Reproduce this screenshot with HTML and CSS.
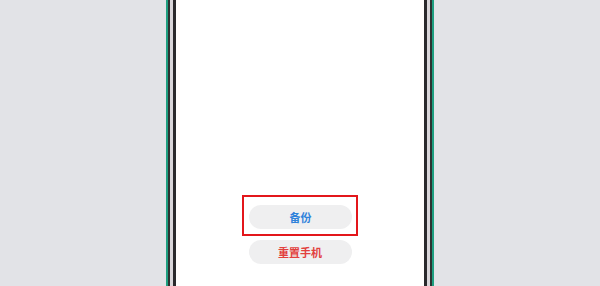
FILE: index.html
```html
<!DOCTYPE html>
<html lang="zh-CN">

<head>
    <meta charset="UTF-8">
    <meta name="viewport" content="width=device-width, initial-scale=1.0">
    <title>备份</title>
    <link rel="stylesheet" href="styles.css">
</head>

<body>
    <div class="stage">
        <div class="phone">
            <div class="actions">
                <div class="highlight">
                    <button class="pill backup">备份</button>
                </div>
                <button class="pill reset">重置手机</button>
            </div>
        </div>
    </div>
</body>

</html>
```

FILE: styles.css
```css
body {
    margin: 0;
    font-family: "Noto Sans CJK SC", "Noto Sans", sans-serif;
}

.stage {
    height: 286px;
    background: #e2e3e7;
    display: flex;
    justify-content: center;
    overflow: hidden;
}

.phone {
    width: 248px;
    height: 326px;
    margin-top: -20px;
    background: #fff;
    /* bezel lines: dark, light, dark, green */
    box-shadow: 0 0 0 3px #2a2a2d, 0 0 0 6px #d9d6da, 0 0 0 8px #2c3331, 0 0 0 10px #1e9f80;
    display: flex;
    flex-direction: column;
    justify-content: flex-end;
    align-items: center;
    padding-bottom: 42px;
    box-sizing: border-box;
}

.actions {
    display: flex;
    flex-direction: column;
    align-items: center;
    gap: 4px;
}

.highlight {
    border: 2px solid #e3161b;
    padding: 6px 4px 5px 5px;
}

.pill {
    width: 103px;
    height: 24px;
    border: none;
    border-radius: 12px;
    background: #efeff0;
    font-family: inherit;
    font-size: 11px;
    font-weight: 700;
    padding: 0;
    cursor: pointer;
}

.backup {
    color: #2f82db;
}

.reset {
    color: #e2403d;
}
```
